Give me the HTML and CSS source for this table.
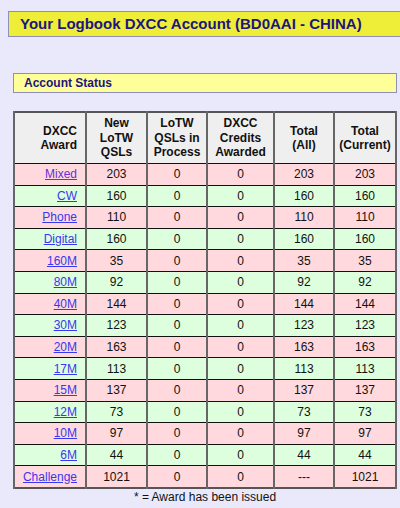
FILE: index.html
```html
<!DOCTYPE html>
<html>
<head>
<meta charset="utf-8">
<link rel="stylesheet" href="styles.css">
</head>
<body>
<div class="title">Your Logbook DXCC Account (BD0AAI - CHINA)</div>
<div class="section">
  <div class="status">Account Status</div>
  <table class="awards">
    <thead>
      <tr>
        <th class="c1">DXCC<br>Award</th>
        <th class="c2">New<br>LoTW<br>QSLs</th>
        <th class="c3">LoTW<br>QSLs in<br>Process</th>
        <th class="c4">DXCC<br>Credits<br>Awarded</th>
        <th class="c5">Total<br>(All)</th>
        <th class="c6">Total<br>(Current)</th>
      </tr>
    </thead>
    <tbody>
      <tr class="pink"><td class="aw"><a class="visited" href="#">Mixed</a></td><td>203</td><td>0</td><td>0</td><td>203</td><td>203</td></tr>
      <tr class="green"><td class="aw"><a href="#">CW</a></td><td>160</td><td>0</td><td>0</td><td>160</td><td>160</td></tr>
      <tr class="pink"><td class="aw"><a href="#">Phone</a></td><td>110</td><td>0</td><td>0</td><td>110</td><td>110</td></tr>
      <tr class="green"><td class="aw"><a href="#">Digital</a></td><td>160</td><td>0</td><td>0</td><td>160</td><td>160</td></tr>
      <tr class="pink"><td class="aw"><a href="#">160M</a></td><td>35</td><td>0</td><td>0</td><td>35</td><td>35</td></tr>
      <tr class="green"><td class="aw"><a href="#">80M</a></td><td>92</td><td>0</td><td>0</td><td>92</td><td>92</td></tr>
      <tr class="pink"><td class="aw"><a href="#">40M</a></td><td>144</td><td>0</td><td>0</td><td>144</td><td>144</td></tr>
      <tr class="green"><td class="aw"><a href="#">30M</a></td><td>123</td><td>0</td><td>0</td><td>123</td><td>123</td></tr>
      <tr class="pink"><td class="aw"><a href="#">20M</a></td><td>163</td><td>0</td><td>0</td><td>163</td><td>163</td></tr>
      <tr class="green"><td class="aw"><a href="#">17M</a></td><td>113</td><td>0</td><td>0</td><td>113</td><td>113</td></tr>
      <tr class="pink"><td class="aw"><a href="#">15M</a></td><td>137</td><td>0</td><td>0</td><td>137</td><td>137</td></tr>
      <tr class="green"><td class="aw"><a href="#">12M</a></td><td>73</td><td>0</td><td>0</td><td>73</td><td>73</td></tr>
      <tr class="pink"><td class="aw"><a href="#">10M</a></td><td>97</td><td>0</td><td>0</td><td>97</td><td>97</td></tr>
      <tr class="green"><td class="aw"><a href="#">6M</a></td><td>44</td><td>0</td><td>0</td><td>44</td><td>44</td></tr>
      <tr class="pink"><td class="aw"><a href="#">Challenge</a></td><td>1021</td><td>0</td><td>0</td><td>---</td><td>1021</td></tr>
    </tbody>
  </table>
  <div class="note">* = Award has been issued</div>
</div>
</body>
</html>
```
FILE: styles.css
```css
html, body {
  background: #e9e9fb;
}
body {
  margin: 0;
  padding: 11px 0 0 8px;
  font-family: "Liberation Sans", Arial, sans-serif;
  color: #111;
  overflow: hidden;
}
.title {
  box-sizing: border-box;
  height: 26px;
  margin-right: -4px;
  padding-left: 11px;
  background: #eeee38;
  border: 1px solid #8f8fb8;
  border-right: none;
  color: #1c1580;
  font-weight: bold;
  font-size: 15px;
  line-height: 24px;
}
.section {
  margin: 36px 3px 0 5px;
}
.status {
  box-sizing: border-box;
  height: 20px;
  padding-left: 10px;
  background: #ffff99;
  border: 1px solid #8f8fb8;
  color: #1c1580;
  font-weight: bold;
  font-size: 12px;
  line-height: 18px;
}
.awards {
  margin-top: 18px;
  width: 100%;
  border-collapse: collapse;
  font-size: 12px;
  table-layout: fixed;
  border: 2px solid #555;
}
.awards th, .awards td {
  border-top: 1px solid #111;
  border-bottom: 1px solid #111;
  border-left: 2px solid #666;
  border-right: 2px solid #666;
  padding: 0;
  text-align: center;
}
.awards th {
  background: #efefef;
  height: 50px;
  line-height: 14.5px;
  font-weight: bold;
  color: #111;
}
.awards td {
  height: 20.6px;
  line-height: 14px;
}
.awards th.c1 { width: 62px; text-align: right; padding-right: 8px; }
.awards th.c2 { width: 59px; }
.awards th.c3 { width: 58px; }
.awards th.c4 { width: 65px; }
.awards th.c5 { width: 58px; }
.awards td.aw {
  text-align: right;
  padding-right: 8px;
}
.pink td { background: #ffd9dd; }
.green td { background: #ddffdd; }
.awards a {
  color: #3838ee;
  text-decoration: underline;
}
.awards a.visited {
  color: #6a2ed8;
}
.note {
  text-align: center;
  font-size: 12px;
  margin-top: 1px;
  color: #111;
}
```
